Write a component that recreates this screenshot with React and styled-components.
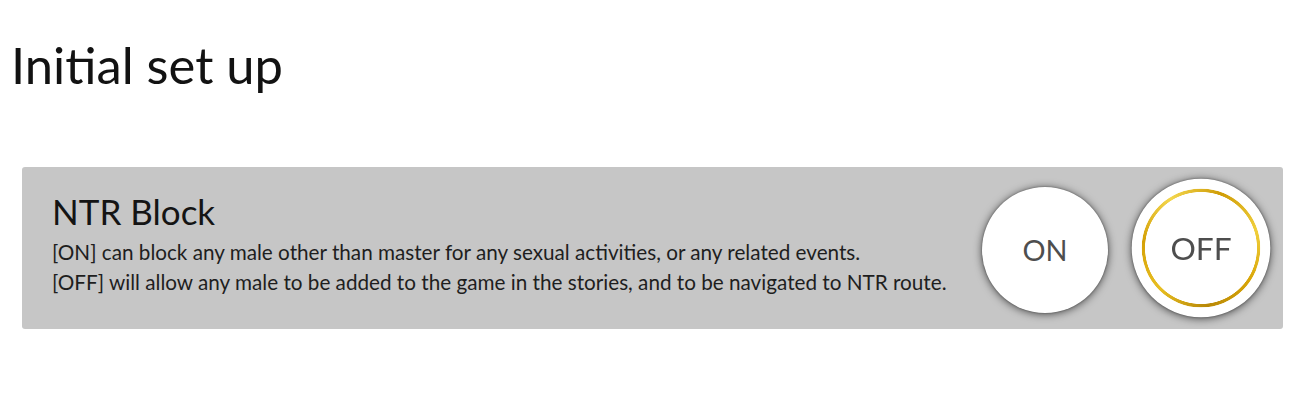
import React from "react";
import styled, { createGlobalStyle, css } from "styled-components";

const GlobalStyle = createGlobalStyle`
  html, body { margin: 0; padding: 0; background: #ffffff; }
  body { font-family: "Lato", "Noto Sans", sans-serif; color: #111111; }
`;

const Page = styled.main`
  width: 1299px;
  height: 405px;
  display: flex;
  flex-direction: column;
  padding: 35px 16px 0 22px;
  box-sizing: border-box;
`;

const Heading = styled.h1`
  margin: 0 0 72px -11px;
  font-size: 50.7px;
  line-height: 60px;
  font-weight: 400;
  color: #121212;
`;

const Panel = styled.section`
  height: 162px;
  display: flex;
  align-items: flex-start;
  justify-content: space-between;
  background: #c6c6c6;
  border-radius: 3px;
  padding: 0 19px 0 30px;
  box-sizing: border-box;
`;

const Info = styled.div`
  display: flex;
  flex-direction: column;
  padding-top: 23px;
`;

const Title = styled.h2`
  margin: 0 0 5px;
  font-size: 35px;
  line-height: 42px;
  font-weight: 400;
  color: #141414;
`;

const Desc = styled.p`
  margin: 0;
  font-size: 20.7px;
  line-height: 30px;
  color: #1e1e1e;
`;

const Toggle = styled.div`
  align-self: center;
  display: flex;
  align-items: center;
  gap: 30px;
  margin-top: 3px;
`;

const Choice = styled.button`
  position: relative;
  width: 126px;
  height: 126px;
  border-radius: 50%;
  border: none;
  padding: 0;
  background: #ffffff;
  box-shadow: 0 1px 8px rgba(0, 0, 0, 0.65), 0 0 2px rgba(0, 0, 0, 0.4);
  font-family: "Lato", "Noto Sans", sans-serif;
  font-size: 28.8px;
  color: #4e4e4e;
  display: flex;
  align-items: center;
  justify-content: center;
  cursor: pointer;
  ${(p) =>
    p.$active &&
    css`
      transform: scale(1.1);
      margin-top: -3px;
      &::after {
        content: "";
        position: absolute;
        inset: 9px;
        border-radius: 50%;
        background: conic-gradient(
          from 20deg,
          #cf9c06,
          #f0cf3c,
          #d9a608,
          #b88806,
          #e8bf22,
          #d4a006,
          #f3d64e,
          #cf9c06
        );
        -webkit-mask: radial-gradient(circle closest-side, transparent 50.6px, #000 51.2px);
        mask: radial-gradient(circle closest-side, transparent 50.6px, #000 51.2px);
      }
    `}
`;

export default function App() {
  return (
    <Page>
      <GlobalStyle />
      <Heading>Initial set up</Heading>
      <Panel>
        <Info>
          <Title>NTR Block</Title>
          <Desc>
            [ON] can block any male other than master for any sexual activities, or any related events.
            <br />
            [OFF] will allow any male to be added to the game in the stories, and to be navigated to NTR route.
          </Desc>
        </Info>
        <Toggle>
          <Choice type="button">ON</Choice>
          <Choice type="button" $active>
            OFF
          </Choice>
        </Toggle>
      </Panel>
    </Page>
  );
}
